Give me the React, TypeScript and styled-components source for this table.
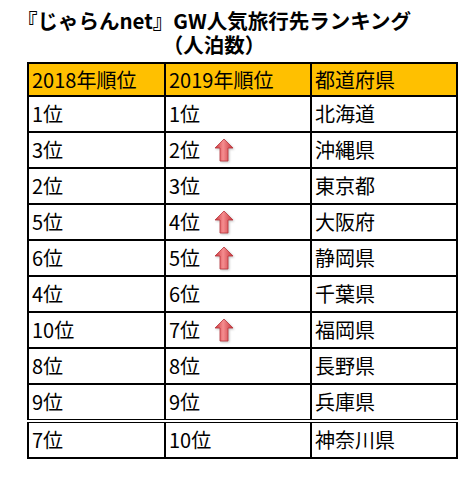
import React, { ReactElement } from 'react';
import styled, { createGlobalStyle } from 'styled-components';

const GlobalStyle = createGlobalStyle`
  html, body {
    margin: 0;
    padding: 0;
    background: #ffffff;
  }
  body {
    font-family: "Noto Sans CJK JP", "Noto Sans", sans-serif;
    color: #000000;
  }
`;

const Page = styled.div`
  width: 461px;
  height: 480px;
  padding-top: 8px;
  box-sizing: border-box;
`;

const Title = styled.h1`
  margin: 0 0 0 11px;
  width: 406px;
  font-size: 20.5px;
  font-weight: 700;
  line-height: 24px;
  text-align: center;
`;

const Table = styled.table`
  margin: 6px 0 0 27px;
  border-collapse: collapse;
  width: 429px;
  table-layout: fixed;
`;

const HeadCell = styled.th`
  background: #ffc000;
  border: 2px solid #000;
  height: 31px;
  padding: 0 3px;
  font-size: 20px;
  font-weight: 400;
  text-align: left;
  line-height: 31px;
  white-space: nowrap;
`;

const Row = styled.tr<{ $last?: boolean }>`
  border-top: ${(p) => (p.$last ? '4px double #000' : '2px solid #000')};
`;

const Cell = styled.td`
  border-left: 2px solid #000;
  border-right: 2px solid #000;
  border-bottom: 2px solid #000;
  height: 34px;
  padding: 0 3px;
  font-size: 20px;
  line-height: 34px;
  white-space: nowrap;
`;

const CellLine = styled.div`
  display: flex;
  align-items: center;
  height: 34px;
`;

const Rank = styled.span`
  width: 45px;
  flex: none;
`;

const ArrowBox = styled.svg`
  display: block;
  flex: none;
  filter: drop-shadow(1px 1px 1px rgba(0, 0, 0, 0.25));
`;

const UpArrow = (): ReactElement => (
  <ArrowBox width="20" height="25" viewBox="0 0 20 25">
    <defs>
      <linearGradient id="ag" x1="0" y1="0" x2="1" y2="0">
        <stop offset="0" stopColor="#c8333a" />
        <stop offset="0.45" stopColor="#f58d8f" />
        <stop offset="1" stopColor="#c5323a" />
      </linearGradient>
    </defs>
    <path
      d="M10 1 L19 10 L14 10 L14 23 L6 23 L6 10 L1 10 Z"
      fill="url(#ag)"
      stroke="#b8343a"
      strokeWidth="0.8"
      strokeLinejoin="round"
    />
  </ArrowBox>
);

type Item = { prev: string; cur: string; up?: boolean; pref: string };

const data: Item[] = [
  { prev: '1位', cur: '1位', pref: '北海道' },
  { prev: '3位', cur: '2位', up: true, pref: '沖縄県' },
  { prev: '2位', cur: '3位', pref: '東京都' },
  { prev: '5位', cur: '4位', up: true, pref: '大阪府' },
  { prev: '6位', cur: '5位', up: true, pref: '静岡県' },
  { prev: '4位', cur: '6位', pref: '千葉県' },
  { prev: '10位', cur: '7位', up: true, pref: '福岡県' },
  { prev: '8位', cur: '8位', pref: '長野県' },
  { prev: '9位', cur: '9位', pref: '兵庫県' },
  { prev: '7位', cur: '10位', pref: '神奈川県' },
];

const App = (): ReactElement => (
  <Page>
    <GlobalStyle />
    <Title>
      『じゃらんnet』GW人気旅行先ランキング
      <br />
      （人泊数）
    </Title>
    <Table>
      <colgroup>
        <col style={{ width: 137 }} />
        <col style={{ width: 146 }} />
        <col style={{ width: 146 }} />
      </colgroup>
      <thead>
        <tr>
          <HeadCell>2018年順位</HeadCell>
          <HeadCell>2019年順位</HeadCell>
          <HeadCell>都道府県</HeadCell>
        </tr>
      </thead>
      <tbody>
        {data.map((d, i) => (
          <Row key={d.pref} $last={i === data.length - 1}>
            <Cell>{d.prev}</Cell>
            <Cell>
              <CellLine>
                <Rank>{d.cur}</Rank>
                {d.up && <UpArrow />}
              </CellLine>
            </Cell>
            <Cell>{d.pref}</Cell>
          </Row>
        ))}
      </tbody>
    </Table>
  </Page>
);

export default App;
